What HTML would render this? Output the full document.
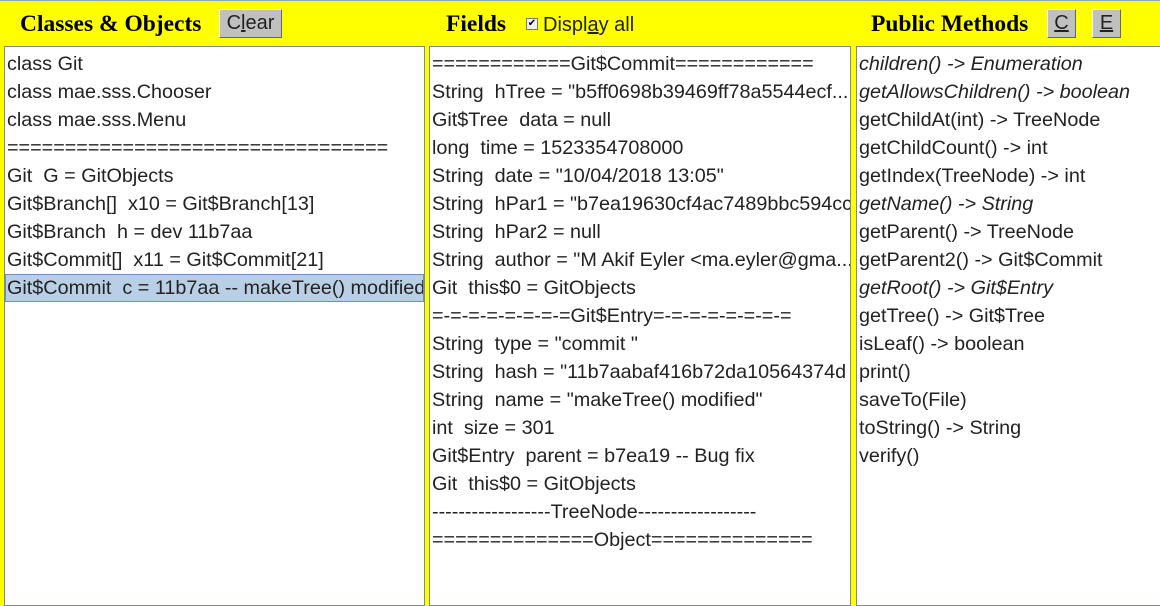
<!DOCTYPE html>
<html><head><meta charset="utf-8"><style>
html,body{margin:0;padding:0;width:1160px;height:593px;overflow:hidden;background:#ffff00;font-family:"Liberation Sans",Arial,sans-serif;}
.top{position:absolute;left:0;top:0;width:1160px;height:1px;background:#8aa9c0}
.h{position:absolute;font-family:"Liberation Serif",serif;font-weight:bold;font-size:23.5px;color:#000;top:11px}
.btn{position:absolute;top:9px;height:29px;background:#c0c0c0;border:1px solid;border-color:#fff #666 #666 #fff;box-sizing:border-box;font-size:20px;color:#222;text-align:center;line-height:27px}
.panel{position:absolute;top:46px;height:560px;background:#fff;border:1px solid #7a8a9a;box-sizing:border-box;overflow:hidden}
.row{height:28px;line-height:28px;font-size:19.8px;color:#222;padding-left:2px;white-space:nowrap;position:relative}
.sel{background:#b8cfe5;outline:1px solid #6f8fbf;outline-offset:-1px}
i{font-style:italic}
u{text-decoration:underline}
</style></head><body>
<div class="top"></div>
<div class="h" style="left:20px">Classes &amp; Objects</div>
<div class="btn" style="left:219px;width:63px">C<u>l</u>ear</div>
<div class="h" style="left:446px">Fields</div>
<div style="position:absolute;left:526px;top:18px;width:12px;height:12px;border:1px solid #777;background:#eee;box-sizing:border-box;font-size:10px;line-height:10px;text-align:center;color:#000">✔</div>
<div style="position:absolute;left:543px;top:14px;font-size:20px;color:#222">Displ<u>a</u>y all</div>
<div class="h" style="left:871px">Public Methods</div>
<div class="btn" style="left:1047px;width:29px"><u>C</u></div>
<div class="btn" style="left:1092px;width:29px"><u>E</u></div>

<div class="panel" style="left:4px;width:421px;padding-top:3px">
<div class="row">class Git</div>
<div class="row">class mae.sss.Chooser</div>
<div class="row">class mae.sss.Menu</div>
<div class="row">=================================</div>
<div class="row">Git&nbsp; G = GitObjects</div>
<div class="row">Git$Branch[]&nbsp; x10 = Git$Branch[13]</div>
<div class="row">Git$Branch&nbsp; h = dev 11b7aa</div>
<div class="row">Git$Commit[]&nbsp; x11 = Git$Commit[21]</div>
<div class="row sel">Git$Commit&nbsp; c = 11b7aa -- makeTree() modified</div>
</div>

<div class="panel" style="left:429px;width:422px;padding-top:3px">
<div class="row">============Git$Commit============</div>
<div class="row">String&nbsp; hTree = "b5ff0698b39469ff78a5544ecf...</div>
<div class="row">Git$Tree&nbsp; data = null</div>
<div class="row">long&nbsp; time = 1523354708000</div>
<div class="row">String&nbsp; date = "10/04/2018 13:05"</div>
<div class="row">String&nbsp; hPar1 = "b7ea19630cf4ac7489bbc594cc</div>
<div class="row">String&nbsp; hPar2 = null</div>
<div class="row">String&nbsp; author = "M Akif Eyler &lt;ma.eyler@gma...</div>
<div class="row">Git&nbsp; this$0 = GitObjects</div>
<div class="row">=-=-=-=-=-=-=-=Git$Entry=-=-=-=-=-=-=-=</div>
<div class="row">String&nbsp; type = "commit "</div>
<div class="row">String&nbsp; hash = "11b7aabaf416b72da10564374d</div>
<div class="row">String&nbsp; name = "makeTree() modified"</div>
<div class="row">int&nbsp; size = 301</div>
<div class="row">Git$Entry&nbsp; parent = b7ea19 -- Bug fix</div>
<div class="row">Git&nbsp; this$0 = GitObjects</div>
<div class="row">------------------TreeNode------------------</div>
<div class="row">==============Object==============</div>
</div>

<div class="panel" style="left:856px;width:310px;padding-top:3px">
<div class="row"><i>children() -&gt; Enumeration</i></div>
<div class="row"><i>getAllowsChildren() -&gt; boolean</i></div>
<div class="row">getChildAt(int) -&gt; TreeNode</div>
<div class="row">getChildCount() -&gt; int</div>
<div class="row">getIndex(TreeNode) -&gt; int</div>
<div class="row"><i>getName() -&gt; String</i></div>
<div class="row">getParent() -&gt; TreeNode</div>
<div class="row">getParent2() -&gt; Git$Commit</div>
<div class="row"><i>getRoot() -&gt; Git$Entry</i></div>
<div class="row">getTree() -&gt; Git$Tree</div>
<div class="row">isLeaf() -&gt; boolean</div>
<div class="row">print()</div>
<div class="row">saveTo(File)</div>
<div class="row">toString() -&gt; String</div>
<div class="row">verify()</div>
</div>
</body></html>
